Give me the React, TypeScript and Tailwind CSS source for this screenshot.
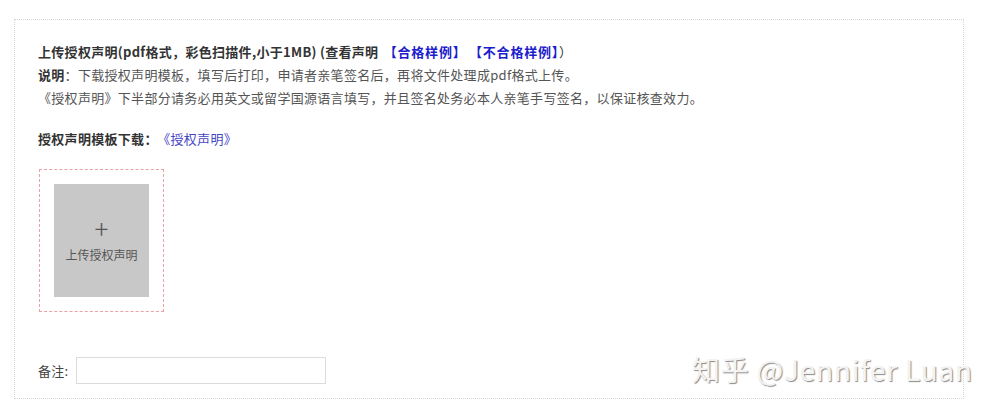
import React from 'react';

const font = { fontFamily: '"Noto Sans CJK SC", "Liberation Sans", sans-serif' };

export default function App() {
    return (
        <div className="relative h-[412px] w-[1000px] bg-white pl-[14px] pt-[19px]" style={font}>
            <div className="h-[380px] w-[950px] border border-dotted border-[#d6d6d6] pl-[23px] pt-[20px] text-[13px] tracking-[0.3px] text-[#555]">
                {/* Instructions */}
                <div className="leading-[23px]">
                    <p className="font-bold text-[#333]">
                        上传授权声明(pdf格式，彩色扫描件,小于1MB) (查看声明{' '}
                        <a className="ml-[2px] tracking-[0.8px] text-[#1c1ccc]">【合格样例】</a>
                        <a className="ml-[9px] tracking-[0.8px] text-[#1c1ccc]">【不合格样例】</a>
                        <span className="font-normal">）</span>
                    </p>
                    <p>
                        <span className="font-bold text-[#333]">说明</span>：下载授权声明模板，填写后打印，申请者亲笔签名后，再将文件处理成pdf格式上传。
                    </p>
                    <p>《授权声明》下半部分请务必用英文或留学国源语言填写，并且签名处务必本人亲笔手写签名，以保证核查效力。</p>
                </div>

                <p className="mt-[18px] leading-[23px]">
                    <span className="font-bold text-[#333]">授权声明模板下载：</span>
                    <a className="ml-[6px] text-[#4646c4]">《授权声明》</a>
                </p>

                {/* Upload */}
                <div className="mt-[19px] ml-[1px] h-[143px] w-[125px] border border-dashed border-[#eaa0a6] pt-[14px] pl-[14px]">
                    <div className="flex h-[113px] w-[95px] flex-col items-center justify-center bg-[#c8c8c8] text-[#555]">
                        <span className="text-[26px] font-extralight leading-[28px]">+</span>
                        <span className="mt-[4px] mb-[4px] text-[12px] leading-[18px] tracking-normal">上传授权声明</span>
                    </div>
                </div>

                {/* Remark */}
                <div className="mt-[45px] flex items-center">
                    <span className="text-[#444]">备注:</span>
                    <input className="ml-[7px] h-[27px] w-[250px] border border-[#dcdcdc] outline-none" />
                </div>
            </div>

            <div className="pointer-events-none absolute left-[692px] top-[349px] text-[28px] leading-[40px] tracking-[0.8px] text-[#f3f3f3] [text-shadow:1px_1px_1px_#8a8a8a]">
                知乎 @Jennifer Luan
            </div>
        </div>
    );
}
